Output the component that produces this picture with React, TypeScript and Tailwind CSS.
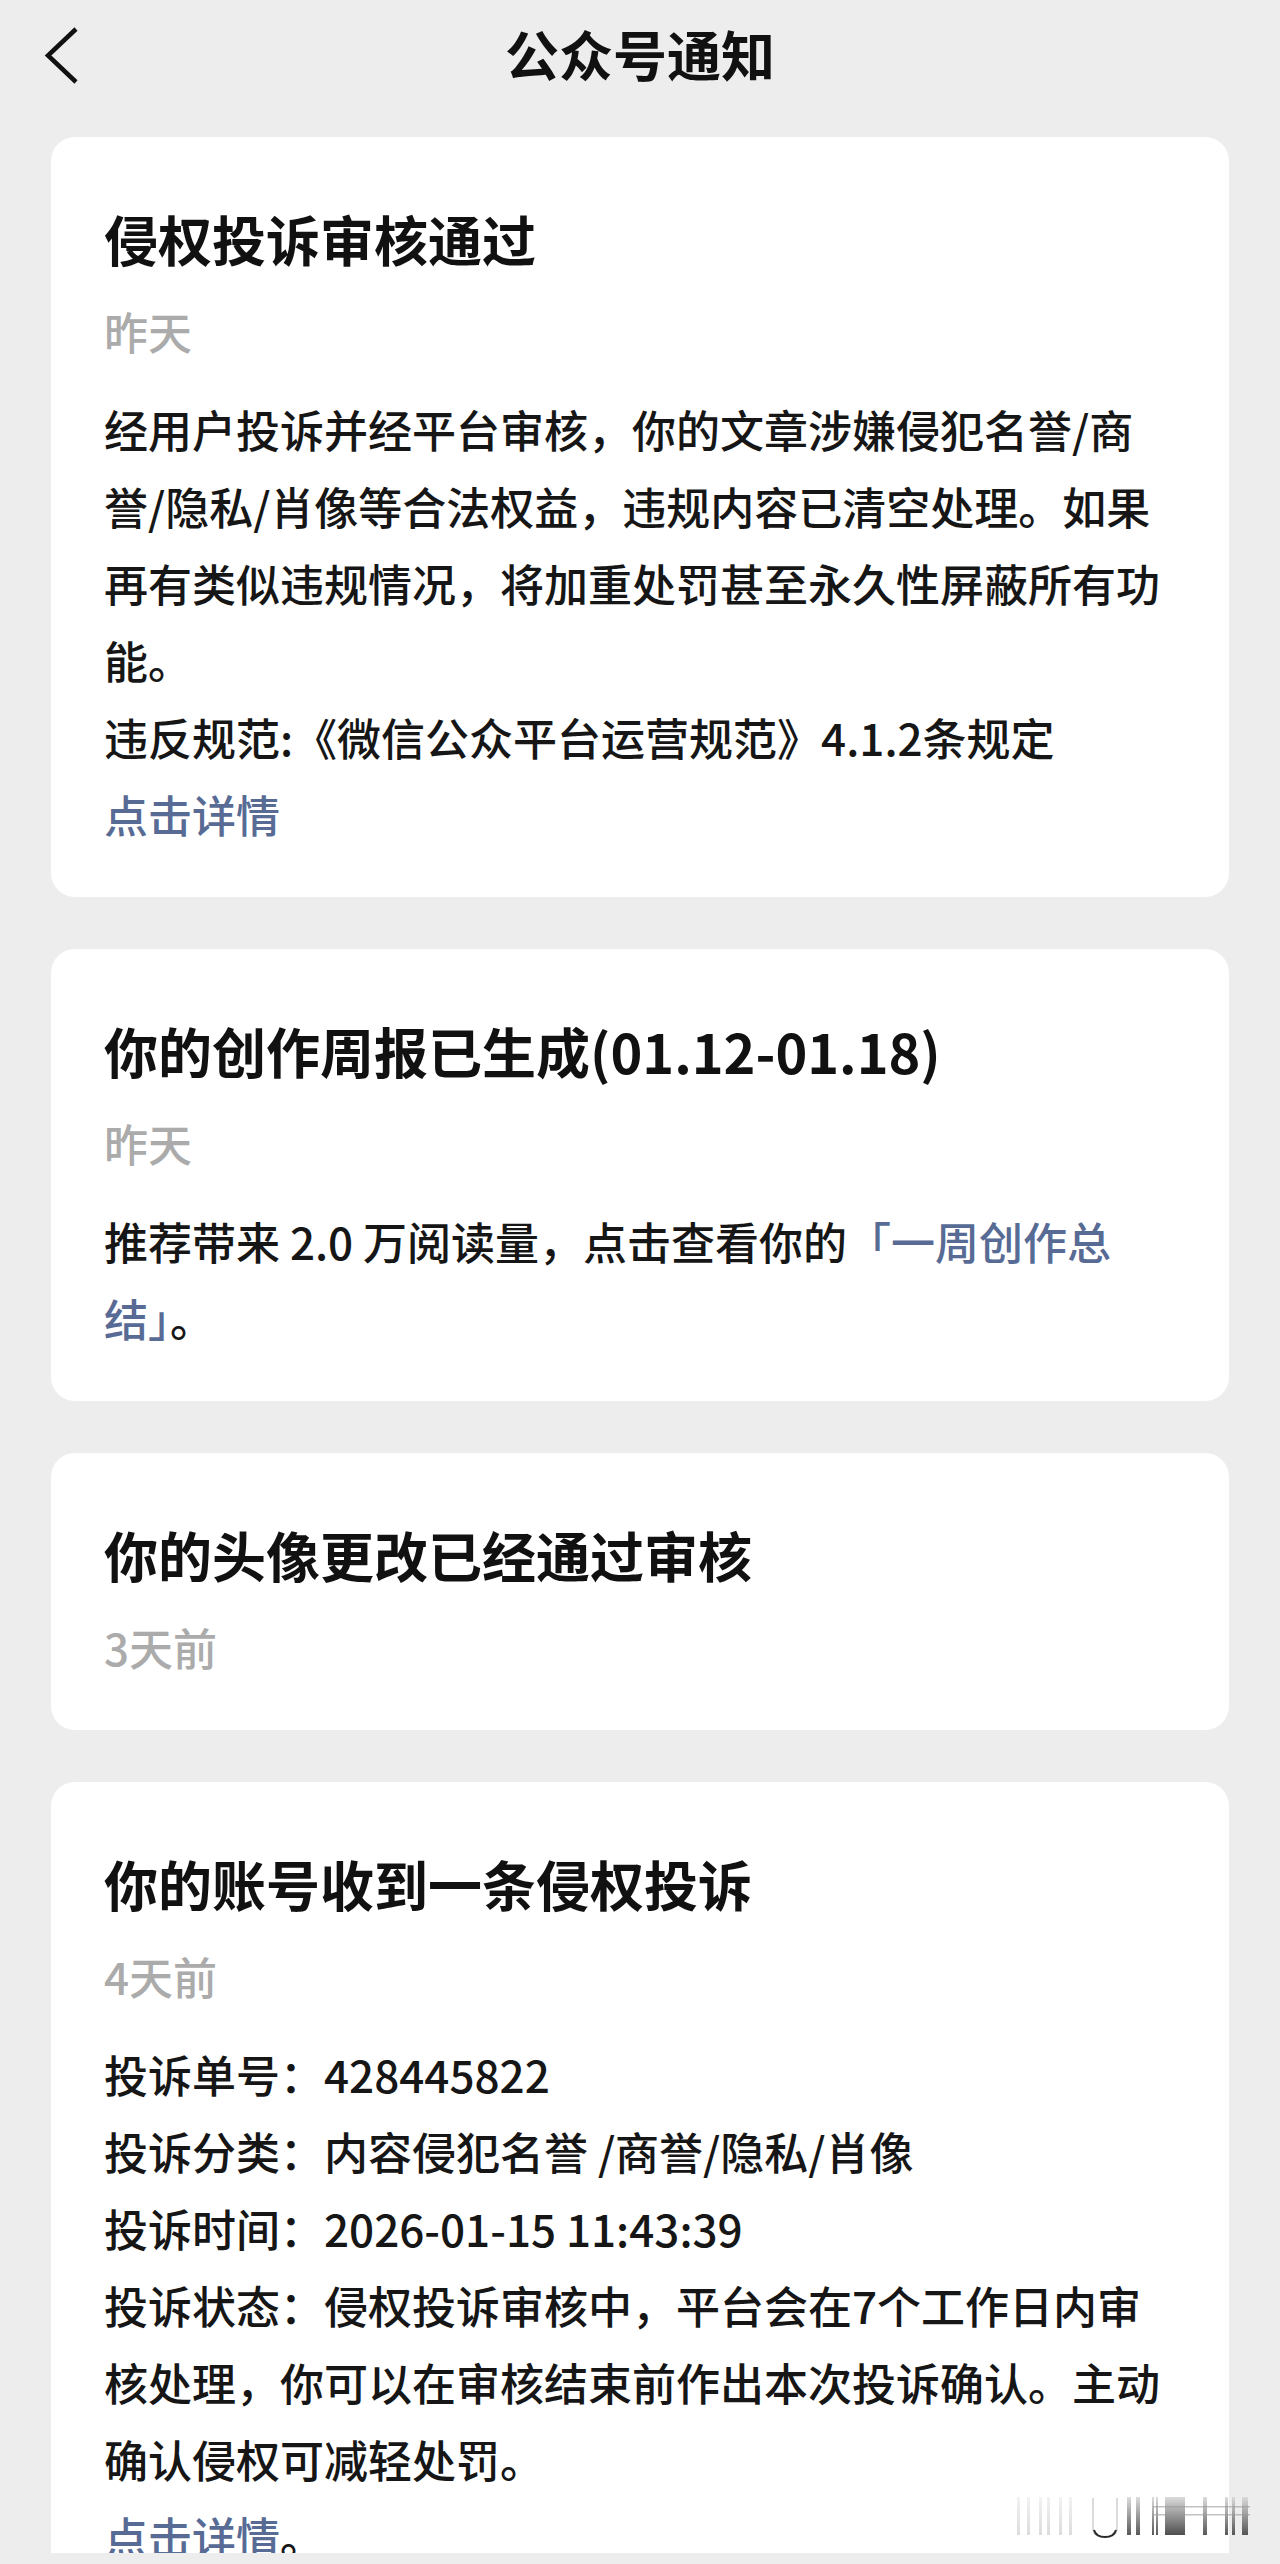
import React from "react";

type CardProps = {
    title: string;
    time: string;
    children?: React.ReactNode;
};

function Card({ title, time, children }: CardProps) {
    return (
        <section className="shrink-0 rounded-[24px] bg-white pl-[53px] pr-[64px] pt-[63px] pb-[44px]">
            <h2 className="text-[54px] leading-[77px] font-semibold text-[#111111]">{title}</h2>
            <p className="mt-[16px] text-[44px] leading-[77px] font-medium text-[#ababab]">{time}</p>
            {children && <div className="mt-[21px] text-[44px] leading-[77px] font-medium text-[#161616]">{children}</div>}
        </section>
    );
}

function Link({ children }: { children: React.ReactNode }) {
    return <span className="text-[#576b95]">{children}</span>;
}

function BackIcon() {
    return (
        <svg className="absolute left-[44px] top-[26px]" width="36" height="60" viewBox="0 0 36 60" fill="none">
            <path d="M32 3 L4 29.5 L32 56" stroke="#111111" strokeWidth="4.5" strokeLinejoin="miter" />
        </svg>
    );
}

// smeared watermark in the lower right corner of the screenshot
function Smear() {
    const faint = [7, 17, 29, 37, 49, 59];
    const dark = [
        { x: 117, w: 4 },
        { x: 126, w: 4 },
        { x: 142, w: 2 },
        { x: 146, w: 2 },
        { x: 193, w: 4 },
        { x: 215, w: 3 },
        { x: 222, w: 3 },
        { x: 232, w: 6 },
    ];
    return (
        <svg className="absolute left-[1010px] top-[2490px]" width="250" height="50" viewBox="0 0 250 50">
            <defs>
                <linearGradient id="dk" x1="0" y1="0" x2="0" y2="1">
                    <stop offset="0" stopColor="#d8d8d8" />
                    <stop offset="1" stopColor="#3a3a3a" />
                </linearGradient>
                <linearGradient id="lt" x1="0" y1="0" x2="0" y2="1">
                    <stop offset="0" stopColor="#f2f2f2" />
                    <stop offset="1" stopColor="#dcdcdc" />
                </linearGradient>
            </defs>
            {faint.map((x) => (
                <rect key={x} x={x} y="7" width="3" height="38" fill="url(#lt)" />
            ))}
            <path d="M83 8 V38 Q83 47 95 47 Q107 47 107 38 V8" stroke="#cfcfcf" strokeWidth="1.5" fill="none" />
            <path d="M84 40 Q86 47 95 47 Q104 47 106 40" stroke="#2a2a2a" strokeWidth="2" fill="none" />
            {dark.map((b) => (
                <rect key={b.x} x={b.x} y="7" width={b.w} height="38" fill="url(#dk)" opacity="0.85" />
            ))}
            <rect x="155" y="7" width="20" height="38" fill="url(#dk)" opacity="0.9" />
            <rect x="143" y="16" width="97" height="1.5" fill="#9a9a9a" opacity="0.6" />
            <rect x="143" y="24" width="97" height="1.5" fill="#9a9a9a" opacity="0.6" />
        </svg>
    );
}

export default function App() {
    return (
        <div className="relative h-[2564px] w-full overflow-hidden bg-[#ededed] font-['Noto_Sans_CJK_SC','Noto_Sans',sans-serif]">
            <header className="relative flex h-[113px] items-center justify-center pb-[6px]">
                <BackIcon />
                <h1 className="text-[54px] leading-none font-bold text-[#111111]">公众号通知</h1>
            </header>

            <main className="flex h-[2440px] flex-col gap-[52px] overflow-hidden px-[51px] pt-[24px]">
                <Card title="侵权投诉审核通过" time="昨天">
                    <p>经用户投诉并经平台审核，你的文章涉嫌侵犯名誉/商誉/隐私/肖像等合法权益，违规内容已清空处理。如果再有类似违规情况，将加重处罚甚至永久性屏蔽所有功能。</p>
                    <p>违反规范:《微信公众平台运营规范》4.1.2条规定</p>
                    <p><Link>点击详情</Link></p>
                </Card>

                <Card title="你的创作周报已生成(01.12-01.18)" time="昨天">
                    <p>推荐带来 2.0 万阅读量，点击查看你的<Link>「一周创作总结」</Link>。</p>
                </Card>

                <Card title="你的头像更改已经通过审核" time="3天前" />

                <Card title="你的账号收到一条侵权投诉" time="4天前">
                    <p>投诉单号：428445822</p>
                    <p>投诉分类：内容侵犯名誉 /商誉/隐私/肖像</p>
                    <p>投诉时间：2026-01-15 11:43:39</p>
                    <p>投诉状态：侵权投诉审核中，平台会在7个工作日内审核处理，你可以在审核结束前作出本次投诉确认。主动确认侵权可减轻处罚。</p>
                    <p><Link>点击详情</Link>。</p>
                </Card>
            </main>

            <Smear />
        </div>
    );
}
